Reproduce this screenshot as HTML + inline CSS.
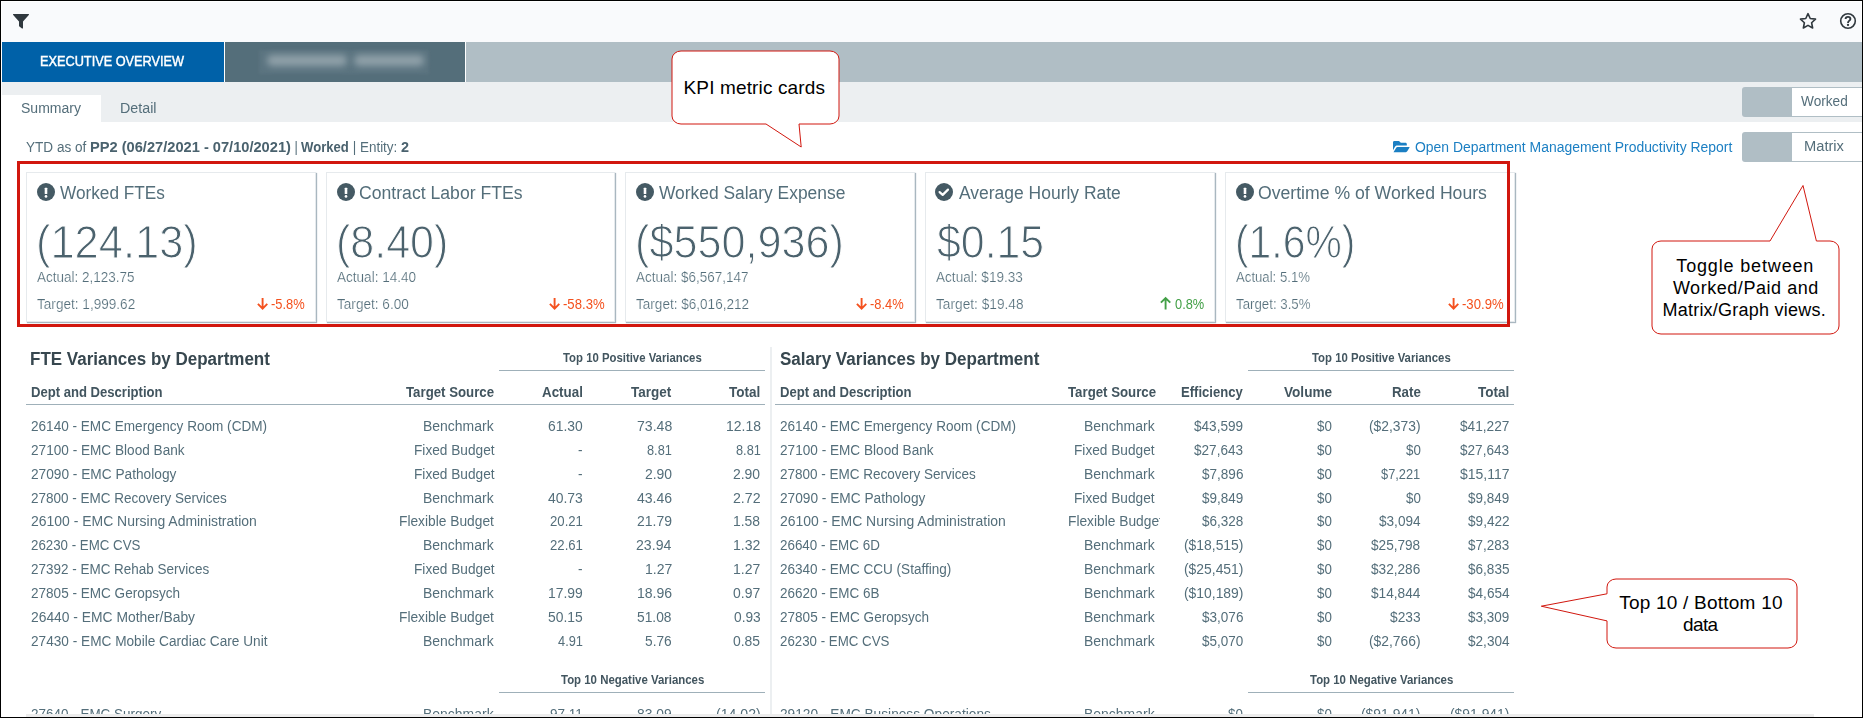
<!DOCTYPE html>
<html lang="en">
<head>
<meta charset="utf-8">
<title>Executive Overview</title>
<style>
html,body{margin:0;padding:0;}
body{width:1863px;height:718px;overflow:hidden;background:#000;position:relative;font-family:"Liberation Sans", sans-serif;color:#546e7a;}
#frame{position:absolute;left:1px;top:1px;width:1861px;height:716px;background:#fff;overflow:hidden;}
#app{position:absolute;left:-1px;top:-1px;width:1863px;height:718px;}
.abs{position:absolute;}
.t{position:absolute;white-space:pre;line-height:1;font-size:14px;color:#546e7a;transform-origin:0 0;}
.big{-webkit-text-stroke:1.1px #fff;color:#4b626d;}
.th18{-webkit-text-stroke:0.15px #fff;}
.th14{-webkit-text-stroke:0.2px #fff;}
.med{-webkit-text-stroke:0.45px #fff;}
#topbar{left:2px;top:2px;width:1859px;height:40px;background:#f9fafc;}
#tabstrip{left:2px;top:42px;width:1860px;height:40px;background:#b0bec5;}
#tab1{left:2px;top:42px;width:222px;height:40px;background:#0061a8;}
#tab2{left:224px;top:42px;width:240px;height:40px;background:#546e7a;border-left:1px solid #fff;border-right:1px solid #fff;box-sizing:content-box;}
#blurbox{left:259px;top:50px;width:170px;height:24px;background:#5b7480;filter:blur(1.5px);}
.blur{top:55px;height:11px;background:#90a1a9;border-radius:5px;filter:blur(3.6px);}
#subbar{left:2px;top:82px;width:1860px;height:40px;background:#eceff1;}
#sumtab{left:2px;top:95px;width:99px;height:27px;background:#fff;}
.tog{left:1742px;width:120px;height:30px;background:#b0bec5;border-radius:3px 0 0 3px;}
.tog i{position:absolute;left:50px;top:1px;right:0;bottom:1px;background:#fff;}
.card{top:172px;width:288px;height:148px;background:#fff;border:1px solid #e6eaed;box-shadow:1px 1px 1px #a9b7c0;}
#redbox{left:17px;top:161px;width:1487px;height:160px;border:3px solid #d1170e;}
.hl{height:1px;background:#9fb0b9;}
#vdiv{left:770px;top:347px;width:2px;height:380px;background:#eceff1;}
#botstrip{left:26px;top:714px;width:1788px;height:3px;background:#ececec;}
svg{position:absolute;overflow:visible;}
</style>
</head>
<body>
<div id="frame"><div id="app">
<div id="topbar" class="abs"></div>
<div id="tabstrip" class="abs"></div>
<div id="tab1" class="abs"></div>
<div id="tab2" class="abs"></div>
<div id="blurbox" class="abs"></div>
<div class="abs blur" style="left:267px;width:80px"></div>
<div class="abs blur" style="left:354px;width:70px"></div>
<div id="subbar" class="abs"></div>
<div id="sumtab" class="abs"></div>
<div class="abs tog" style="top:87px"><i></i></div>
<div class="abs tog" style="top:132px"><i></i></div>

<!-- top icons -->
<svg style="left:13px;top:14px" width="16" height="15" viewBox="0 0 16 15"><path d="M0.6 0h14.8c0.5 0 0.8 0.6 0.4 1L10 7.4V13.9c0 0.5-0.6 0.8-1 0.5l-2.6-1.9c-0.2-0.15-0.4-0.4-0.4-0.7V7.4L0.2 1C-0.2 0.6 0.1 0 0.6 0z" fill="#30383e"/></svg>
<svg style="left:1799px;top:12px" width="18" height="18" viewBox="0 0 18 18"><path d="M9 1.700L11.230 6.530L16.510 7.160L12.610 10.770L13.640 15.990L9 13.400L4.360 15.990L5.390 10.770L1.490 7.160L6.770 6.530Z" fill="none" stroke="#30383e" stroke-width="1.600" stroke-linejoin="round"/></svg>
<svg style="left:1840px;top:13px" width="16" height="16" viewBox="0 0 16 16"><circle cx="8" cy="8" r="7.300" fill="none" stroke="#30383e" stroke-width="1.600"/><path d="M5.600 6.100C5.600 4.600 6.700 3.900 8 3.900C9.400 3.900 10.400 4.700 10.400 5.900C10.400 7.600 8 7.700 8 9.900" fill="none" stroke="#30383e" stroke-width="1.900"/><circle cx="8" cy="11.900" r="1.150" fill="#30383e"/></svg>

<!-- folder icon -->
<svg style="left:1393.4px;top:141.3px" width="16.6" height="11.3" viewBox="0 32 576 400" preserveAspectRatio="none"><path fill="#1b7fc3" d="M572.7 292.4l-72.4 124.200c-17.200 29.500-48.800 47.600-82.900 47.600h-400l93.500-160.400c8.600-14.700 24.400-23.800 41.500-23.800h400c18.500 0 30.100 20.100 20.300 36.100zM152.300 224h327.700v-48c0-26.500-21.500-48-48-48h-160l-64-64h-160c-26.500 0-48 21.500-48 48v278l69.100-118.400c17.100-29.400 48.900-47.600 83.200-47.600z" transform="translate(0,-32)"/></svg>

<!-- cards -->
<div class="abs card" style="left:26px"></div>
<svg style="left:37px;top:183px" width="18" height="18" viewBox="0 0 18 18"><circle cx="9" cy="9" r="9" fill="#455a64"/><rect x="7.7" y="4.7" width="2.6" height="6.4" rx="0.5" fill="#fff"/><circle cx="9" cy="13.4" r="1.35" fill="#fff"/></svg>
<div class="abs card" style="left:326px;width:287px"></div>
<svg style="left:337px;top:183px" width="18" height="18" viewBox="0 0 18 18"><circle cx="9" cy="9" r="9" fill="#455a64"/><rect x="7.7" y="4.7" width="2.6" height="6.4" rx="0.5" fill="#fff"/><circle cx="9" cy="13.4" r="1.35" fill="#fff"/></svg>
<div class="abs card" style="left:625px"></div>
<svg style="left:636px;top:183px" width="18" height="18" viewBox="0 0 18 18"><circle cx="9" cy="9" r="9" fill="#455a64"/><rect x="7.7" y="4.7" width="2.6" height="6.4" rx="0.5" fill="#fff"/><circle cx="9" cy="13.4" r="1.35" fill="#fff"/></svg>
<div class="abs card" style="left:925px"></div>
<svg style="left:935.2px;top:183.1px" width="18" height="18" viewBox="0 0 18 18"><circle cx="9" cy="9" r="9" fill="#455a64"/><path d="M4.6 9.1L7.7 11.9L13 6.6" fill="none" stroke="#fff" stroke-width="2.2" stroke-linecap="round" stroke-linejoin="round"/></svg>
<div class="abs card" style="left:1225px"></div>
<svg style="left:1236px;top:183px" width="18" height="18" viewBox="0 0 18 18"><circle cx="9" cy="9" r="9" fill="#455a64"/><rect x="7.7" y="4.7" width="2.6" height="6.4" rx="0.5" fill="#fff"/><circle cx="9" cy="13.4" r="1.35" fill="#fff"/></svg>
<svg style="left:257.32px;top:296.7px" width="11.2" height="12.6" viewBox="0 0 11.2 12.6"><path d="M5.6 1V11.4M0.9 6.9L5.6 11.6L10.3 6.9" fill="none" stroke="#f4511e" stroke-width="1.9" stroke-linejoin="miter"/></svg>
<svg style="left:549.45px;top:296.7px" width="11.2" height="12.6" viewBox="0 0 11.2 12.6"><path d="M5.6 1V11.4M0.9 6.9L5.6 11.6L10.3 6.9" fill="none" stroke="#f4511e" stroke-width="1.9" stroke-linejoin="miter"/></svg>
<svg style="left:856.32px;top:296.7px" width="11.2" height="12.6" viewBox="0 0 11.2 12.6"><path d="M5.6 1V11.4M0.9 6.9L5.6 11.6L10.3 6.9" fill="none" stroke="#f4511e" stroke-width="1.9" stroke-linejoin="miter"/></svg>
<svg style="left:1159.91px;top:297.4px" width="11.2" height="12.6" viewBox="0 0 11.2 12.6"><path d="M5.6 12.6V1.2M0.9 5.7L5.6 1L10.3 5.7" fill="none" stroke="#43a047" stroke-width="1.9" stroke-linejoin="miter"/></svg>
<svg style="left:1448.45px;top:296.7px" width="11.2" height="12.6" viewBox="0 0 11.2 12.6"><path d="M5.6 1V11.4M0.9 6.9L5.6 11.6L10.3 6.9" fill="none" stroke="#f4511e" stroke-width="1.9" stroke-linejoin="miter"/></svg>
<div id="redbox" class="abs"></div>

<!-- table lines -->
<div class="abs hl" style="left:26px;top:404px;width:739px"></div>
<div class="abs hl" style="left:499px;top:370px;width:266px"></div>
<div class="abs hl" style="left:499px;top:692px;width:266px"></div>
<div id="vdiv" class="abs"></div>
<div class="abs hl" style="left:775px;top:404px;width:739px"></div>
<div class="abs hl" style="left:1248px;top:370px;width:266px"></div>
<div class="abs hl" style="left:1248px;top:692px;width:266px"></div>

<span class="t med" style="left:39.96px;top:54.03px;font-size:14.5px;color:#ffffff;transform:scaleX(0.8780);">EXECUTIVE OVERVIEW</span>
<span class="t" style="left:20.56px;top:101.15px;transform:scaleX(1.0020);">Summary</span>
<span class="t" style="left:120.03px;top:101.15px;transform:scaleX(1.0205);">Detail</span>
<span class="t" style="left:1800.94px;top:93.95px;transform:scaleX(0.9741);">Worked</span>
<span class="t" style="left:1803.60px;top:139.15px;transform:scaleX(1.0486);">Matrix</span>
<span class="t" style="left:1414.74px;top:140.05px;color:#1b7fc3;transform:scaleX(0.9947);">Open Department Management Productivity Report</span>
<span class="t" style="left:59.72px;top:183.56px;font-size:18px;transform:scaleX(0.9557);">Worked FTEs</span>
<span class="t big" style="left:36.11px;top:218.21px;font-size:47px;transform:scaleX(0.9241);">(124.13)</span>
<span class="t th14" style="left:37.17px;top:270.15px;transform:scaleX(0.9642);">Actual: 2,123.75</span>
<span class="t th14" style="left:37.09px;top:297.15px;transform:scaleX(0.9707);">Target: 1,999.62</span>
<span class="t" style="left:271.04px;top:297.15px;color:#f4511e;transform:scaleX(0.9219);">-5.8%</span>
<span class="t" style="left:358.91px;top:183.56px;font-size:18px;transform:scaleX(0.9788);">Contract Labor FTEs</span>
<span class="t big" style="left:336.13px;top:218.21px;font-size:47px;transform:scaleX(0.9150);">(8.40)</span>
<span class="t th14" style="left:337.17px;top:270.15px;transform:scaleX(0.9678);">Actual: 14.40</span>
<span class="t th14" style="left:337.09px;top:297.15px;transform:scaleX(0.9717);">Target: 6.00</span>
<span class="t" style="left:563.17px;top:297.15px;color:#f4511e;transform:scaleX(0.9379);">-58.3%</span>
<span class="t" style="left:658.72px;top:183.56px;font-size:18px;transform:scaleX(0.9665);">Worked Salary Expense</span>
<span class="t big" style="left:635.12px;top:218.21px;font-size:47px;transform:scaleX(0.9193);">($550,936)</span>
<span class="t th14" style="left:636.17px;top:270.15px;transform:scaleX(0.9632);">Actual: $6,567,147</span>
<span class="t th14" style="left:636.10px;top:297.15px;transform:scaleX(0.9686);">Target: $6,016,212</span>
<span class="t" style="left:870.04px;top:297.15px;color:#f4511e;transform:scaleX(0.9219);">-8.4%</span>
<span class="t" style="left:958.77px;top:183.56px;font-size:18px;transform:scaleX(0.9703);">Average Hourly Rate</span>
<span class="t big" style="left:937.34px;top:218.21px;font-size:47px;transform:scaleX(0.9113);">$0.15</span>
<span class="t th14" style="left:936.17px;top:270.15px;transform:scaleX(0.9709);">Actual: $19.33</span>
<span class="t th14" style="left:936.09px;top:297.15px;transform:scaleX(0.9783);">Target: $19.48</span>
<span class="t" style="left:1174.51px;top:297.15px;color:#43a047;transform:scaleX(0.9165);">0.8%</span>
<span class="t" style="left:1257.97px;top:183.56px;font-size:18px;transform:scaleX(0.9793);">Overtime % of Worked Hours</span>
<span class="t big" style="left:1235.27px;top:218.21px;font-size:47px;transform:scaleX(0.8690);">(1.6%)</span>
<span class="t th14" style="left:1236.17px;top:270.15px;transform:scaleX(0.9412);">Actual: 5.1%</span>
<span class="t th14" style="left:1236.10px;top:297.15px;transform:scaleX(0.9478);">Target: 3.5%</span>
<span class="t" style="left:1462.17px;top:297.15px;color:#f4511e;transform:scaleX(0.9379);">-30.9%</span>
<span class="t" style="left:30.36px;top:349.76px;font-size:18px;font-weight:700;color:#37474f;transform:scaleX(0.9442);">FTE Variances by Department</span>
<span class="t" style="left:30.62px;top:385.15px;font-weight:700;color:#42555f;transform:scaleX(0.9344);">Dept and Description</span>
<span class="t" style="left:406.36px;top:385.15px;font-weight:700;color:#42555f;transform:scaleX(0.9462);">Target Source</span>
<span class="t" style="left:542.01px;top:385.15px;font-weight:700;color:#42555f;transform:scaleX(0.9545);">Actual</span>
<span class="t" style="left:631.26px;top:385.15px;font-weight:700;color:#42555f;transform:scaleX(0.9630);">Target</span>
<span class="t" style="left:729.46px;top:385.15px;font-weight:700;color:#42555f;transform:scaleX(0.9659);">Total</span>
<span class="t" style="left:562.92px;top:351.84px;font-size:12px;font-weight:700;color:#42555f;transform:scaleX(0.9467);">Top 10 Positive Variances</span>
<span class="t" style="left:561.03px;top:674.04px;font-size:12px;font-weight:700;color:#42555f;transform:scaleX(0.9520);">Top 10 Negative Variances</span>
<span class="t" style="left:30.82px;top:419.15px;transform:scaleX(0.9694);">26140 - EMC Emergency Room (CDM)</span>
<span class="t" style="left:423.37px;top:419.15px;transform:scaleX(0.9973);">Benchmark</span>
<span class="t" style="left:547.73px;top:419.15px;transform:scaleX(0.9907);">61.30</span>
<span class="t" style="left:636.71px;top:419.15px;transform:scaleX(1.0047);">73.48</span>
<span class="t" style="left:725.51px;top:419.15px;transform:scaleX(0.9961);">12.18</span>
<span class="t" style="left:30.82px;top:443.15px;transform:scaleX(0.9721);">27100 - EMC Blood Bank</span>
<span class="t" style="left:413.58px;top:443.15px;transform:scaleX(0.9761);">Fixed Budget</span>
<span class="t" style="left:577.96px;top:443.15px;transform:scaleX(0.9760);">-</span>
<span class="t" style="left:647.11px;top:443.15px;transform:scaleX(0.9107);">8.81</span>
<span class="t" style="left:735.61px;top:443.15px;transform:scaleX(0.9107);">8.81</span>
<span class="t" style="left:30.81px;top:467.15px;transform:scaleX(0.9778);">27090 - EMC Pathology</span>
<span class="t" style="left:413.58px;top:467.15px;transform:scaleX(0.9761);">Fixed Budget</span>
<span class="t" style="left:577.96px;top:467.15px;transform:scaleX(0.9760);">-</span>
<span class="t" style="left:644.74px;top:467.15px;transform:scaleX(0.9947);">2.90</span>
<span class="t" style="left:733.24px;top:467.15px;transform:scaleX(0.9947);">2.90</span>
<span class="t" style="left:30.82px;top:491.15px;transform:scaleX(0.9645);">27800 - EMC Recovery Services</span>
<span class="t" style="left:423.37px;top:491.15px;transform:scaleX(0.9973);">Benchmark</span>
<span class="t" style="left:547.69px;top:491.15px;transform:scaleX(0.9940);">40.73</span>
<span class="t" style="left:636.85px;top:491.15px;transform:scaleX(1.0020);">43.46</span>
<span class="t" style="left:732.95px;top:491.15px;transform:scaleX(1.0114);">2.72</span>
<span class="t" style="left:30.80px;top:514.15px;transform:scaleX(0.9970);">26100 - EMC Nursing Administration</span>
<span class="t" style="left:399.23px;top:514.15px;transform:scaleX(0.9831);">Flexible Budget</span>
<span class="t" style="left:549.60px;top:514.15px;transform:scaleX(0.9403);">20.21</span>
<span class="t" style="left:637.00px;top:514.15px;transform:scaleX(0.9980);">21.79</span>
<span class="t" style="left:733.38px;top:514.15px;transform:scaleX(0.9917);">1.58</span>
<span class="t" style="left:30.83px;top:538.15px;transform:scaleX(0.9497);">26230 - EMC CVS</span>
<span class="t" style="left:423.37px;top:538.15px;transform:scaleX(0.9973);">Benchmark</span>
<span class="t" style="left:549.60px;top:538.15px;transform:scaleX(0.9403);">22.61</span>
<span class="t" style="left:636.38px;top:538.15px;transform:scaleX(1.0085);">23.94</span>
<span class="t" style="left:733.12px;top:538.15px;transform:scaleX(1.0051);">1.32</span>
<span class="t" style="left:30.82px;top:562.15px;transform:scaleX(0.9624);">27392 - EMC Rehab Services</span>
<span class="t" style="left:413.58px;top:562.15px;transform:scaleX(0.9761);">Fixed Budget</span>
<span class="t" style="left:577.96px;top:562.15px;transform:scaleX(0.9760);">-</span>
<span class="t" style="left:644.71px;top:562.15px;transform:scaleX(1.0020);">1.27</span>
<span class="t" style="left:733.21px;top:562.15px;transform:scaleX(1.0020);">1.27</span>
<span class="t" style="left:30.82px;top:586.15px;transform:scaleX(0.9679);">27805 - EMC Geropsych</span>
<span class="t" style="left:423.37px;top:586.15px;transform:scaleX(0.9973);">Benchmark</span>
<span class="t" style="left:547.77px;top:586.15px;transform:scaleX(0.9930);">17.99</span>
<span class="t" style="left:636.91px;top:586.15px;transform:scaleX(1.0020);">18.96</span>
<span class="t" style="left:733.35px;top:586.15px;transform:scaleX(0.9963);">0.97</span>
<span class="t" style="left:30.80px;top:610.15px;transform:scaleX(0.9896);">26440 - EMC Mother/Baby</span>
<span class="t" style="left:399.23px;top:610.15px;transform:scaleX(0.9831);">Flexible Budget</span>
<span class="t" style="left:547.79px;top:610.15px;transform:scaleX(0.9903);">50.15</span>
<span class="t" style="left:637.40px;top:610.15px;transform:scaleX(0.9847);">51.08</span>
<span class="t" style="left:733.66px;top:610.15px;transform:scaleX(0.9814);">0.93</span>
<span class="t" style="left:30.81px;top:634.15px;transform:scaleX(0.9740);">27430 - EMC Mobile Cardiac Care Unit</span>
<span class="t" style="left:423.37px;top:634.15px;transform:scaleX(0.9973);">Benchmark</span>
<span class="t" style="left:557.56px;top:634.15px;transform:scaleX(0.9164);">4.91</span>
<span class="t" style="left:645.18px;top:634.15px;transform:scaleX(0.9809);">5.76</span>
<span class="t" style="left:733.30px;top:634.15px;transform:scaleX(0.9940);">0.85</span>
<span class="t" style="left:30.82px;top:707.15px;transform:scaleX(0.9619);">27640 - EMC Surgery</span>
<span class="t" style="left:423.37px;top:707.15px;transform:scaleX(0.9973);">Benchmark</span>
<span class="t" style="left:549.67px;top:707.15px;transform:scaleX(0.9676);">97.11</span>
<span class="t" style="left:637.23px;top:707.15px;transform:scaleX(0.9913);">83.09</span>
<span class="t" style="left:716.01px;top:707.15px;transform:scaleX(1.0069);">(14.02)</span>
<span class="t" style="left:780.01px;top:349.76px;font-size:18px;font-weight:700;color:#37474f;transform:scaleX(0.9462);">Salary Variances by Department</span>
<span class="t" style="left:780.02px;top:385.15px;font-weight:700;color:#42555f;transform:scaleX(0.9344);">Dept and Description</span>
<span class="t" style="left:1068.36px;top:385.15px;font-weight:700;color:#42555f;transform:scaleX(0.9462);">Target Source</span>
<span class="t" style="left:1181.10px;top:385.15px;font-weight:700;color:#42555f;transform:scaleX(0.9324);">Efficiency</span>
<span class="t" style="left:1284.05px;top:385.15px;font-weight:700;color:#42555f;transform:scaleX(0.9715);">Volume</span>
<span class="t" style="left:1391.59px;top:385.15px;font-weight:700;color:#42555f;transform:scaleX(0.9511);">Rate</span>
<span class="t" style="left:1478.46px;top:385.15px;font-weight:700;color:#42555f;transform:scaleX(0.9659);">Total</span>
<span class="t" style="left:1312.32px;top:351.84px;font-size:12px;font-weight:700;color:#42555f;transform:scaleX(0.9467);">Top 10 Positive Variances</span>
<span class="t" style="left:1310.13px;top:674.04px;font-size:12px;font-weight:700;color:#42555f;transform:scaleX(0.9520);">Top 10 Negative Variances</span>
<span class="t" style="left:780.22px;top:419.15px;transform:scaleX(0.9694);">26140 - EMC Emergency Room (CDM)</span>
<span class="t" style="left:1083.97px;top:419.15px;transform:scaleX(0.9973);">Benchmark</span>
<span class="t" style="left:1194.27px;top:419.15px;transform:scaleX(0.9698);">$43,599</span>
<span class="t" style="left:1317.37px;top:419.15px;transform:scaleX(0.9540);">$0</span>
<span class="t" style="left:1369.29px;top:419.15px;transform:scaleX(0.9889);">($2,373)</span>
<span class="t" style="left:1460.05px;top:419.15px;transform:scaleX(0.9769);">$41,227</span>
<span class="t" style="left:780.22px;top:443.15px;transform:scaleX(0.9721);">27100 - EMC Blood Bank</span>
<span class="t" style="left:1074.18px;top:443.15px;transform:scaleX(0.9761);">Fixed Budget</span>
<span class="t" style="left:1194.25px;top:443.15px;transform:scaleX(0.9691);">$27,643</span>
<span class="t" style="left:1317.37px;top:443.15px;transform:scaleX(0.9540);">$0</span>
<span class="t" style="left:1405.67px;top:443.15px;transform:scaleX(0.9540);">$0</span>
<span class="t" style="left:1460.35px;top:443.15px;transform:scaleX(0.9691);">$27,643</span>
<span class="t" style="left:780.22px;top:467.15px;transform:scaleX(0.9645);">27800 - EMC Recovery Services</span>
<span class="t" style="left:1083.97px;top:467.15px;transform:scaleX(0.9973);">Benchmark</span>
<span class="t" style="left:1201.88px;top:467.15px;transform:scaleX(0.9672);">$7,896</span>
<span class="t" style="left:1317.37px;top:467.15px;transform:scaleX(0.9540);">$0</span>
<span class="t" style="left:1381.40px;top:467.15px;transform:scaleX(0.9160);">$7,221</span>
<span class="t" style="left:1460.05px;top:467.15px;transform:scaleX(0.9978);">$15,117</span>
<span class="t" style="left:780.21px;top:491.15px;transform:scaleX(0.9778);">27090 - EMC Pathology</span>
<span class="t" style="left:1074.18px;top:491.15px;transform:scaleX(0.9761);">Fixed Budget</span>
<span class="t" style="left:1202.13px;top:491.15px;transform:scaleX(0.9622);">$9,849</span>
<span class="t" style="left:1317.37px;top:491.15px;transform:scaleX(0.9540);">$0</span>
<span class="t" style="left:1405.67px;top:491.15px;transform:scaleX(0.9540);">$0</span>
<span class="t" style="left:1468.23px;top:491.15px;transform:scaleX(0.9622);">$9,849</span>
<span class="t" style="left:780.20px;top:514.15px;transform:scaleX(0.9970);">26100 - EMC Nursing Administration</span>
<span class="t" style="left:1067.77px;top:514.15px;transform:scaleX(0.9831);">Flexible Budget</span>
<span class="t" style="left:1201.98px;top:514.15px;transform:scaleX(0.9647);">$6,328</span>
<span class="t" style="left:1317.37px;top:514.15px;transform:scaleX(0.9540);">$0</span>
<span class="t" style="left:1378.82px;top:514.15px;transform:scaleX(0.9709);">$3,094</span>
<span class="t" style="left:1467.83px;top:514.15px;transform:scaleX(0.9728);">$9,422</span>
<span class="t" style="left:780.23px;top:538.15px;transform:scaleX(0.9573);">26640 - EMC 6D</span>
<span class="t" style="left:1083.97px;top:538.15px;transform:scaleX(0.9973);">Benchmark</span>
<span class="t" style="left:1184.12px;top:538.15px;transform:scaleX(0.9918);">($18,515)</span>
<span class="t" style="left:1317.37px;top:538.15px;transform:scaleX(0.9540);">$0</span>
<span class="t" style="left:1371.41px;top:538.15px;transform:scaleX(0.9719);">$25,798</span>
<span class="t" style="left:1468.22px;top:538.15px;transform:scaleX(0.9615);">$7,283</span>
<span class="t" style="left:780.22px;top:562.15px;transform:scaleX(0.9670);">26340 - EMC CCU (Staffing)</span>
<span class="t" style="left:1083.97px;top:562.15px;transform:scaleX(0.9973);">Benchmark</span>
<span class="t" style="left:1184.12px;top:562.15px;transform:scaleX(0.9918);">($25,451)</span>
<span class="t" style="left:1317.37px;top:562.15px;transform:scaleX(0.9540);">$0</span>
<span class="t" style="left:1371.31px;top:562.15px;transform:scaleX(0.9739);">$32,286</span>
<span class="t" style="left:1467.86px;top:562.15px;transform:scaleX(0.9693);">$6,835</span>
<span class="t" style="left:780.22px;top:586.15px;transform:scaleX(0.9610);">26620 - EMC 6B</span>
<span class="t" style="left:1083.97px;top:586.15px;transform:scaleX(0.9973);">Benchmark</span>
<span class="t" style="left:1184.12px;top:586.15px;transform:scaleX(0.9918);">($10,189)</span>
<span class="t" style="left:1317.37px;top:586.15px;transform:scaleX(0.9540);">$0</span>
<span class="t" style="left:1370.96px;top:586.15px;transform:scaleX(0.9771);">$14,844</span>
<span class="t" style="left:1467.62px;top:586.15px;transform:scaleX(0.9709);">$4,654</span>
<span class="t" style="left:780.22px;top:610.15px;transform:scaleX(0.9679);">27805 - EMC Geropsych</span>
<span class="t" style="left:1083.97px;top:610.15px;transform:scaleX(0.9973);">Benchmark</span>
<span class="t" style="left:1201.88px;top:610.15px;transform:scaleX(0.9672);">$3,076</span>
<span class="t" style="left:1317.37px;top:610.15px;transform:scaleX(0.9540);">$0</span>
<span class="t" style="left:1390.04px;top:610.15px;transform:scaleX(0.9813);">$233</span>
<span class="t" style="left:1468.23px;top:610.15px;transform:scaleX(0.9622);">$3,309</span>
<span class="t" style="left:780.23px;top:634.15px;transform:scaleX(0.9497);">26230 - EMC CVS</span>
<span class="t" style="left:1083.97px;top:634.15px;transform:scaleX(0.9973);">Benchmark</span>
<span class="t" style="left:1202.00px;top:634.15px;transform:scaleX(0.9627);">$5,070</span>
<span class="t" style="left:1317.37px;top:634.15px;transform:scaleX(0.9540);">$0</span>
<span class="t" style="left:1369.29px;top:634.15px;transform:scaleX(0.9889);">($2,766)</span>
<span class="t" style="left:1467.62px;top:634.15px;transform:scaleX(0.9709);">$2,304</span>
<span class="t" style="left:780.21px;top:707.15px;transform:scaleX(0.9782);">29120 - EMC Business Operations</span>
<span class="t" style="left:1083.97px;top:707.15px;transform:scaleX(0.9973);">Benchmark</span>
<span class="t" style="left:1228.37px;top:707.15px;transform:scaleX(0.9540);">$0</span>
<span class="t" style="left:1317.37px;top:707.15px;transform:scaleX(0.9540);">$0</span>
<span class="t" style="left:1361.42px;top:707.15px;transform:scaleX(0.9918);">($91,941)</span>
<span class="t" style="left:1450.22px;top:707.15px;transform:scaleX(0.9918);">($91,941)</span>
<span class="t" style="left:25.80px;top:140.35px;transform:scaleX(0.9693);">YTD as of </span>
<span class="t" style="left:89.90px;top:140.35px;font-weight:700;color:#4a626e;transform:scaleX(1.0450);">PP2 (06/27/2021 - 07/10/2021)</span>
<span class="t" style="left:290.79px;top:140.35px;transform:scaleX(0.9067);"> | </span>
<span class="t" style="left:301.14px;top:140.35px;font-weight:700;color:#4a626e;transform:scaleX(0.9356);">Worked</span>
<span class="t" style="left:348.94px;top:140.35px;transform:scaleX(0.9600);"> | Entity: </span>
<span class="t" style="left:400.98px;top:140.35px;font-weight:700;color:#4a626e;transform:scaleX(1.0304);">2</span>

<div class="abs" style="left:1160px;top:508px;width:14px;height:28px;background:#fff"></div>
<div id="botstrip" class="abs"></div>

<!-- callouts -->
<svg style="left:0;top:0" width="1863" height="718" viewBox="0 0 1863 718">
<g fill="#fff" stroke="#d1170e" stroke-width="1" stroke-linejoin="miter">
<path d="M681 51H830A9 8 0 0 1 839 59V116A9 8 0 0 1 830 124H799L801.200 147L766 124H681A9 8 0 0 1 672 116V59A9 8 0 0 1 681 51Z"/>
<path d="M1661 241H1770L1803 185.500L1816.400 241H1830A9 8 0 0 1 1839 249V326A9 8 0 0 1 1830 334H1661A9 8 0 0 1 1652 326V249A9 8 0 0 1 1661 241Z"/>
<path d="M1616 579H1788A9 8 0 0 1 1797 587V640A9 8 0 0 1 1788 648H1616A9 8 0 0 1 1607 640V620.900L1541.300 606.200L1607 593.800V587A9 8 0 0 1 1616 579Z"/>
</g>
</svg>
<span class="t" style="left:683.54px;top:77.52px;font-size:19px;color:#000000;letter-spacing:0.139px;font-family:'Liberation Sans',sans-serif;">KPI metric cards</span>
<span class="t" style="left:1676.30px;top:256.76px;font-size:18px;color:#000000;letter-spacing:0.844px;font-family:'Liberation Sans',sans-serif;">Toggle between</span>
<span class="t" style="left:1672.92px;top:278.76px;font-size:18px;color:#000000;letter-spacing:0.542px;font-family:'Liberation Sans',sans-serif;">Worked/Paid and</span>
<span class="t" style="left:1662.42px;top:300.76px;font-size:18px;color:#000000;letter-spacing:0.243px;font-family:'Liberation Sans',sans-serif;">Matrix/Graph views.</span>
<span class="t" style="left:1619.17px;top:592.52px;font-size:19px;color:#000000;letter-spacing:0.228px;font-family:'Liberation Sans',sans-serif;">Top 10 / Bottom 10</span>
<span class="t" style="left:1682.90px;top:614.62px;font-size:19px;color:#000000;letter-spacing:-0.561px;font-family:'Liberation Sans',sans-serif;">data</span>
</div></div>
</body>
</html>
